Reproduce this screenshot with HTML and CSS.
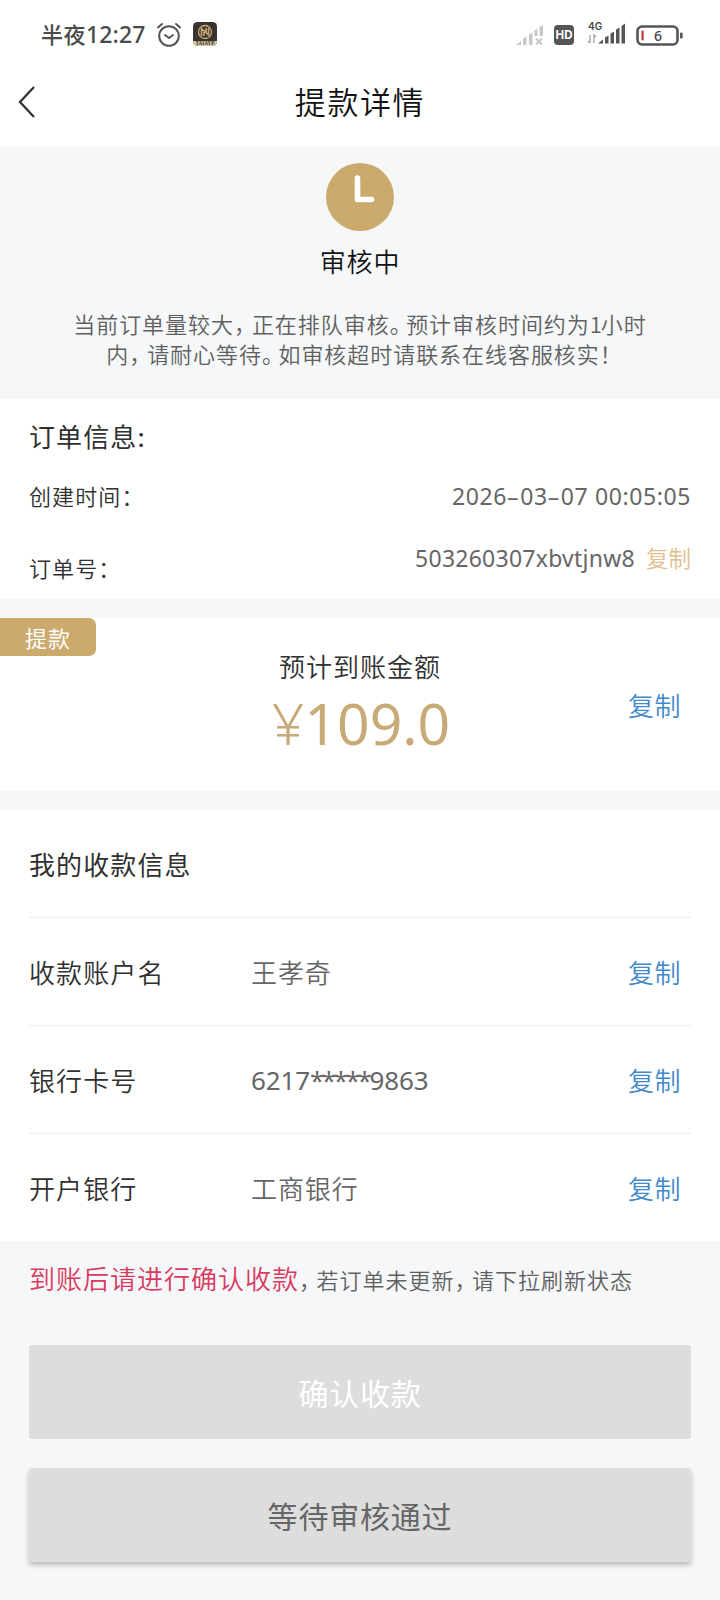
FILE: index.html
```html
<!DOCTYPE html>
<html lang="zh-CN">
<head>
<meta charset="utf-8">
<title>提款详情</title>
<link rel="stylesheet" href="styles.css">
</head>
<body>
<header class="top">
  <div class="status">
    <div class="status-left">
      <span class="clock-text">半夜<b class="clock-digits">12:27</b></span>
      <svg class="alarm" width="26" height="26" viewBox="0 0 26 26" fill="none" stroke="#555" stroke-width="2" stroke-linecap="round" stroke-linejoin="round"><circle cx="13" cy="14" r="9.8"/><path d="M9 13l4 3 4-3M2 5.500 6 2M24 5.500 20 2"/></svg>
      <svg class="app" width="24" height="24" viewBox="0 0 24 24"><defs><clipPath id="app-shape"><rect width="24" height="24" rx="4.500"/></clipPath></defs><g clip-path="url(#app-shape)"><rect width="24" height="24" fill="#3a342e"/><rect y="19" width="24" height="5" fill="#d8c7a0"/><circle cx="12" cy="10" r="6.500" fill="none" stroke="#c9ab78" stroke-width="1.300"/><path d="M8.500 14V6.500L15.500 13V6M11 14v-4M13 6v4" fill="none" stroke="#c9ab78" stroke-width="1.600"/><text x="12" y="23.300" text-anchor="middle" class="app-name">TAIAYP</text></g></svg>
    </div>
    <div class="status-right">
      <svg width="28" height="22" viewBox="0 0 28 22"><path fill="#c8c8c8" d="M0 21l5-4v4zM7 14.500l3.500-2V21H7zM13 10.500l3.500-2V21H13zM18.500 6.500l3-2V12h-3zM23.500 3l3.500-2v11h-3.500z"/><path d="M20 14.500l6 6M26 14.500l-6 6" stroke="#c8c8c8" stroke-width="2.300"/></svg>
      <svg class="hd" width="20" height="20" viewBox="0 0 20 20"><rect width="20" height="20" rx="4" fill="#555"/><text x="10" y="14.200" text-anchor="middle" class="hd-name">HD</text></svg>
      <svg class="net" width="39" height="24" viewBox="0 0 39 24"><text x="1" y="8.500" class="net-name">4G</text><path d="M3 14v8M3 22l-2-2M7 22v-8l2 2" fill="none" stroke="#aaa" stroke-width="1.400"/><path fill="#555" d="M11 22.500l5-4v4zM18 16.500l3.500-2v8H18zM23.500 12.500l3.500-2v12h-3.500zM29 8.500l3.500-2v16H29zM34.500 5l3.500-2.500v20h-3.500z"/></svg>
      <svg class="battery" width="47" height="21" viewBox="0 0 47 21"><rect x="1.500" y="1.500" width="40" height="18" rx="4.500" fill="none" stroke="#555" stroke-width="2.600"/><rect x="5.500" y="5.500" width="2.200" height="10" rx="1" fill="#c33636"/><rect x="44" y="7.500" width="2.600" height="6" rx="1" fill="#555"/><text x="22" y="15.500" text-anchor="middle" class="battery-value">6</text></svg>
    </div>
  </div>
  <nav class="nav">
    <svg class="back" width="20" height="34" viewBox="0 0 20 34"><path d="M17 2 3 17 17 32" fill="none" stroke="#333" stroke-width="2.300"/></svg>
    <h1 class="nav-title">提款详情</h1>
  </nav>
</header>

<section class="review">
  <svg width="68" height="68" viewBox="0 0 68 68"><circle cx="34" cy="34" r="34" fill="#cca96d"/><path d="M31.500 15v21.500H45.500" fill="none" stroke="#fff" stroke-width="5.600" stroke-linecap="round" stroke-linejoin="round"/></svg>
  <h2 class="review-state">审核中</h2>
  <p class="review-note">当前订单量较大<i class="comma">，</i>正在排队审核<i class="stop">。</i>预计审核时间约为<i class="one">1</i>小时<br>内<i class="comma">，</i>请耐心等待<i class="stop">。</i>如审核超时请联系在线客服核实<i class="bang">！</i></p>
</section>

<section class="order">
  <h3 class="order-title">订单信息:</h3>
  <div class="order-row"><span>创建时间：</span><span class="order-value date">2026<i class="dash">–</i>03<i class="dash">–</i>07 00:05:05</span></div>
  <div class="order-row number"><span>订单号：</span><span class="order-value serial">503260307xbvtjnw8<a class="copy-gold">复制</a></span></div>
</section>

<section class="amount">
  <span class="tag">提款</span>
  <div class="amount-main">
    <div class="amount-label">预计到账金额</div>
    <div class="amount-value"><span class="yen">¥</span>109.0</div>
  </div>
  <a class="copy">复制</a>
</section>

<section class="payee">
  <h3 class="payee-title">我的收款信息</h3>
  <div class="payee-row"><span class="payee-key">收款账户名</span><span class="payee-value">王孝奇</span><a class="copy">复制</a></div>
  <div class="payee-row"><span class="payee-key">银行卡号</span><span class="payee-value card">6217<i class="mask">*****</i>9863</span><a class="copy">复制</a></div>
  <div class="payee-row"><span class="payee-key">开户银行</span><span class="payee-value">工商银行</span><a class="copy">复制</a></div>
</section>

<footer class="actions">
  <p class="hint"><span class="hint-strong">到账后请进行确认收款</span><i class="comma">，</i>若订单未更新<i class="comma">，</i>请下拉刷新状态</p>
  <button class="button confirm">确认收款</button>
  <button class="button waiting">等待审核通过</button>
</footer>
</body>
</html>
```
FILE: styles.css
```css
* { box-sizing: border-box; }
body {
  margin: 0;
  width: 720px;
  height: 1600px;
  overflow: hidden;
  background: #f5f7f9;
  color: #303030;
  font-family: "Noto Sans CJK SC", sans-serif;
  font-weight: 350;
}
h1, h2, h3, p { margin: 0; font-weight: inherit; }
i { font-style: normal; }
svg { display: block; flex: none; }

.top { height: 147px; background: #fff; }
.status {
  height: 70px;
  padding: 0 37px 0 41px;
  display: flex;
  justify-content: space-between;
  align-items: center;
}
.status-left, .status-right { display: flex; align-items: center; }
.clock-text { margin-top: -3px; font-size: 22px; font-weight: 500; letter-spacing: 0.500px; color: #4a4a4a; white-space: nowrap; }
.clock-digits { font-family: "Noto Sans", sans-serif; font-size: 23px; font-weight: 500; letter-spacing: 0.100px; }
.alarm { margin-left: 11px; }
.app { margin-left: 11px; margin-top: -2px; }
.app-name { font: 700 5.200px "Liberation Serif", serif; fill: #3a342e; }
.hd { margin-left: 10px; }
.hd-name { font: 700 11.500px Inter, sans-serif; fill: #fff; }
.net { margin: -5px 0 0 13px; }
.net-name { font: 600 10px Inter, sans-serif; fill: #444; }
.battery { margin-left: 10px; }
.battery-value { font: 500 14px "Noto Sans", sans-serif; fill: #444; }

.nav { height: 77px; padding: 0 17px; display: grid; grid-template-columns: 20px 1fr 20px; align-items: center; }
.back { margin-top: -14px; }
.nav-title { margin-top: -15px; text-align: center; font-size: 31px; line-height: 44px; letter-spacing: 1.600px; color: #111; font-weight: 350; }

.review { height: 252px; padding-top: 16px; display: flex; flex-direction: column; align-items: center; }
.review-state { margin-top: 10px; font-size: 26px; line-height: 40px; letter-spacing: 0.800px; color: #111; }
.review-note { margin-top: 27px; text-align: center; font-size: 22px; line-height: 30px; letter-spacing: 0.950px; color: #606060; font-weight: 350; white-space: nowrap; }
.comma { letter-spacing: -4px; }
.stop { letter-spacing: -5.500px; }
.one { letter-spacing: -1px; }
.bang { letter-spacing: -8px; }

.order { height: 200px; padding: 18px 29px 0; background: #fff; }
.order-title { font-size: 26px; line-height: 38px; letter-spacing: 1.100px; font-weight: 400; }
.order-row { display: flex; justify-content: space-between; margin-top: 25px; font-size: 22px; line-height: 30px; letter-spacing: 1.100px; }
.order-row.number { margin-top: 41px; }
.order-value { font-family: "Noto Sans", "Noto Sans CJK SC", sans-serif; font-size: 23px; color: #666; font-weight: 400; }
.date { margin-top: 1px; letter-spacing: 0.600px; }
.dash { letter-spacing: 1.700px; }
.serial { letter-spacing: 0.250px; margin-top: -9px; }
.copy-gold { margin-left: 11px; font-size: 22.500px; color: #e0c08e; font-weight: 350; letter-spacing: 0; }

.amount { height: 173px; margin-top: 19px; background: #fff; display: grid; grid-template-columns: 96px 1fr 96px; }
.tag { width: 96px; height: 38px; padding-left: 25px; border-radius: 0 7px 7px 0; background: #cca96d; color: #fff; font-size: 22px; line-height: 38px; letter-spacing: 1px; font-weight: 400; }
.amount-main { padding-top: 29px; text-align: center; }
.amount-label { font-size: 26px; line-height: 38px; letter-spacing: 1px; }
.amount-value { margin-top: 4px; padding-left: 2px; font-family: "Noto Sans", sans-serif; font-size: 57px; line-height: 68px; font-weight: 400; color: #c8aa77; }
.yen { font-weight: 350; }
.copy { font-size: 26px; line-height: 38px; color: #4089cc; white-space: nowrap; letter-spacing: 0.500px; }
.amount .copy { margin: 68px 0 0 4px; }

.payee { height: 431px; margin-top: 19px; padding: 0 29px; background: #fff; }
.payee-title { height: 107px; font-size: 26px; line-height: 107px; letter-spacing: 1.100px; font-weight: 400; }
.payee-row { height: 108px; border-top: 1px solid #ededed; display: grid; grid-template-columns: 222px 1fr 63px; align-items: center; font-size: 26px; line-height: 38px; letter-spacing: 1.100px; }
.payee-value { color: #666; letter-spacing: 0.900px; }
.payee-value.card { font-family: "Noto Sans", sans-serif; letter-spacing: -0.150px; font-weight: 400; }
.mask { letter-spacing: -2.400px; }

.actions { padding: 17px 29px 0; display: flex; flex-direction: column; }
.hint { height: 40px; font-size: 22px; line-height: 40px; letter-spacing: 1px; color: #606060; white-space: nowrap; font-weight: 350; }
.hint-strong { font-size: 26px; letter-spacing: 1px; color: #d93a60; }
.hint .comma { letter-spacing: -4.500px; }
.button { height: 94px; padding: 0; border: 0; border-radius: 3px; background: #ddd; font: 400 30px "Noto Sans CJK SC", sans-serif; letter-spacing: 0.800px; }
.confirm { margin-top: 47px; color: #fff; }
.waiting { margin-top: 29px; color: #666; box-shadow: 0 3px 5px rgba(0, 0, 0, .25); }
```
